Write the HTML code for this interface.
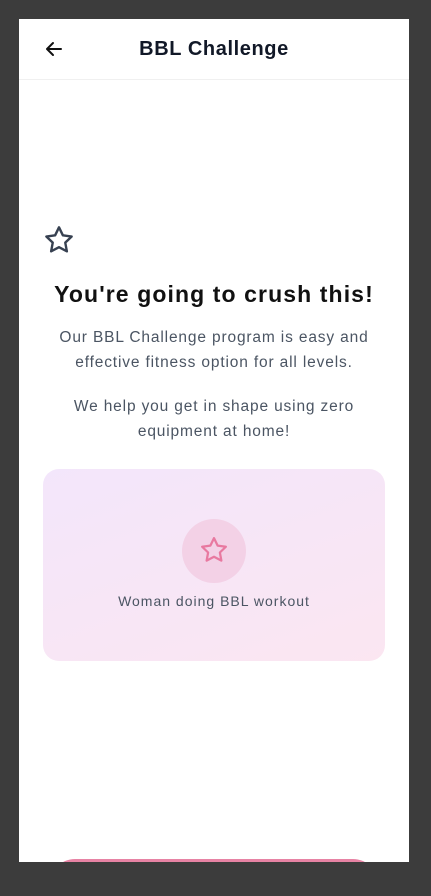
<!DOCTYPE html>
<html><head><meta charset="utf-8"><style>
*{margin:0;padding:0;box-sizing:border-box}
body{width:431px;height:896px;background:#3c3c3c;font-family:"Liberation Sans",sans-serif;position:relative;overflow:hidden}
.panel{position:absolute;left:19px;top:19px;width:390px;height:843px;background:#fff;overflow:hidden}
.hdr{height:61px;border-bottom:1px solid #f0f0f0;position:relative}
.hdr h1{position:absolute;left:0;right:0;top:19px;text-align:center;font-size:20px;font-weight:bold;color:#111827;letter-spacing:0.6px}
.back{position:absolute;left:25px;top:20px}
.star{position:absolute;left:24px;top:205px}
h2{position:absolute;left:0;right:0;top:262px;text-align:center;font-size:23px;font-weight:bold;color:#111;letter-spacing:1.1px}
.p{position:absolute;left:30px;right:30px;text-align:center;font-size:15.5px;line-height:25px;color:#4b5563;letter-spacing:0.85px}
.card{position:absolute;left:24px;top:450px;width:342px;height:192px;border-radius:16px;background:linear-gradient(160deg,#f3e6fb,#fbe6f1)}
.circ{position:absolute;left:139px;top:50px;width:64px;height:64px;border-radius:50%;background:#f3d1e6}
.cap{position:absolute;left:0;right:0;top:124px;text-align:center;font-size:14px;color:#4b5563;letter-spacing:1px}
.btn{position:absolute;left:31px;top:840px;width:328px;height:50px;border-radius:25px;background:#e783a4}
</style></head><body>
<div class="panel">
<div class="hdr">
<svg class="back" width="20" height="20" viewBox="0 0 20 20" fill="none" stroke="#111" stroke-width="2" stroke-linecap="round" stroke-linejoin="round"><path d="M17 10H3M9 4L3 10l6 6"/></svg>
<h1>BBL Challenge</h1>
</div>
<svg class="star" width="32" height="32" viewBox="0 0 24 24" fill="none" stroke="#374151" stroke-width="1.8" stroke-linejoin="round"><path d="M12 2.5l2.9 6 6.6.9-4.8 4.6 1.2 6.5L12 17.4l-5.9 3.1 1.2-6.5L2.5 9.4l6.6-.9z"/></svg>
<h2>You're going to crush this!</h2>
<div class="p" style="top:306px">Our BBL Challenge program is easy and effective fitness option for all levels.</div>
<div class="p" style="top:375px">We help you get in shape using zero<br>equipment at home!</div>
<div class="card">
<div class="circ"><svg style="position:absolute;left:17px;top:16px" width="30" height="30" viewBox="0 0 24 24" fill="none" stroke="#e879a0" stroke-width="1.8" stroke-linejoin="round"><path d="M12 2.5l2.9 6 6.6.9-4.8 4.6 1.2 6.5L12 17.4l-5.9 3.1 1.2-6.5L2.5 9.4l6.6-.9z"/></svg></div>
<div class="cap">Woman doing BBL workout</div>
</div>
<div class="btn"></div>
</div>
</body></html>
